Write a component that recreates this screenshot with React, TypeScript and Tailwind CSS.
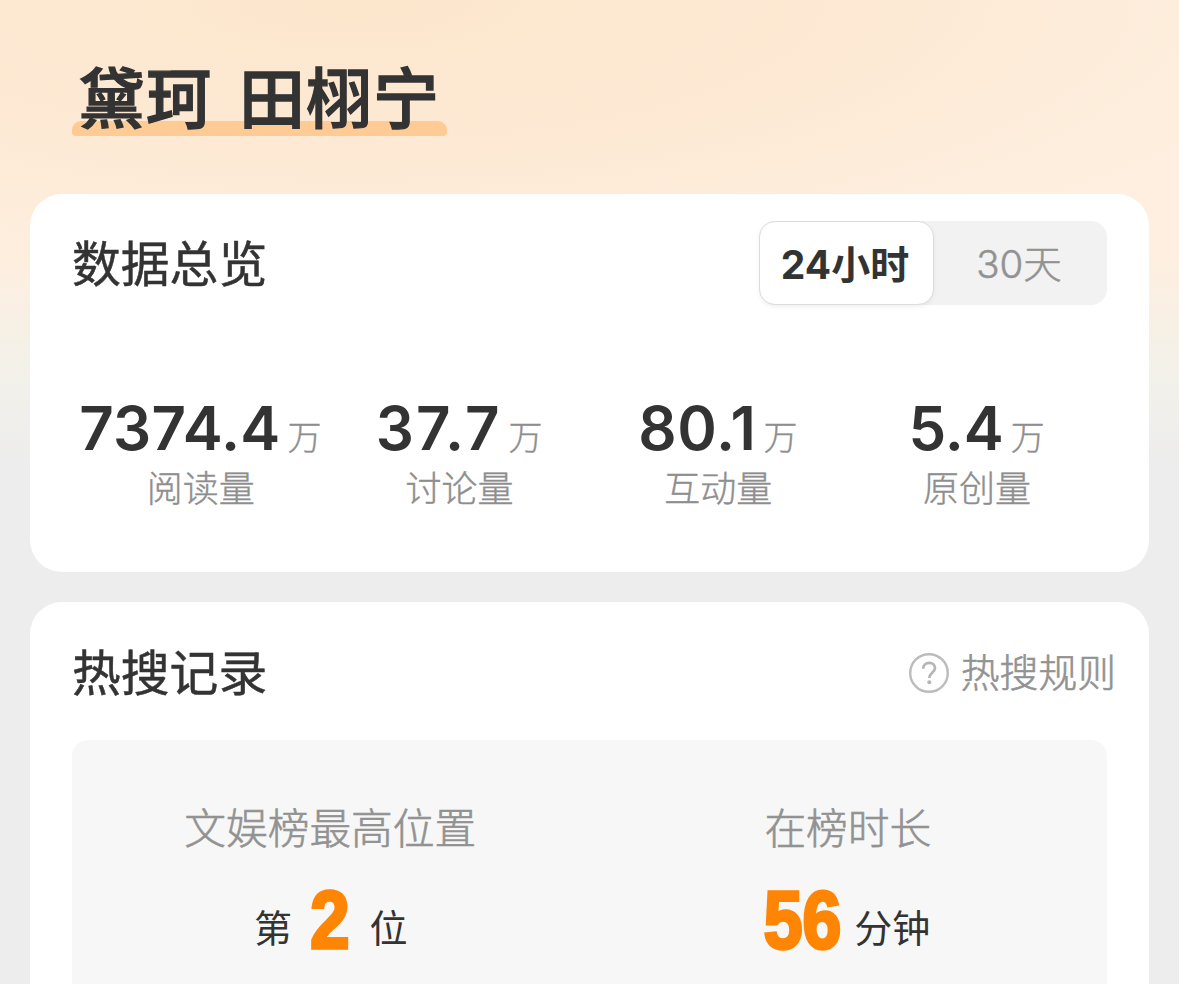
const stats = [
  { value: "7374.4", label: "阅读量", spacing: "tracking-[0.2px]" },
  { value: "37.7", label: "讨论量", spacing: "tracking-[2px]" },
  { value: "80.1", label: "互动量", spacing: "tracking-[0.7px]" },
  { value: "5.4", label: "原创量", spacing: "tracking-[0px]" },
];

function HelpIcon() {
  return (
    <svg className="h-[40px] w-[40px]" viewBox="0 0 40 40" fill="none">
      <circle cx="20" cy="20" r="18.8" stroke="#bcbcbc" strokeWidth="2.4" />
      <path d="M14.2 15.8c0-3.8 2.6-6 6-6s5.8 2.1 5.8 5.2c0 4.4-5.6 4.8-5.6 10" stroke="#b5b5b5" strokeWidth="2.7" />
      <circle cx="20.3" cy="29.2" r="2" fill="#b5b5b5" />
    </svg>
  );
}

export default function App() {
  return (
    <div className="h-[984px] w-[1179px] overflow-hidden bg-[#ededed] font-['Inter','Noto_Sans_CJK_SC',sans-serif] text-[#333333]">
      <div className="h-full bg-[linear-gradient(to_bottom,rgba(237,237,237,0)_0px,rgba(237,237,237,0)_260px,rgba(240,241,235,0.85)_375px,#ededed_460px),radial-gradient(ellipse_1000px_300px_at_30%_0px,#fce7cd_0%,#fde9d3_45%,#feefe0_100%)] px-[30px]">
        <header className="h-[194px] px-[42px] pt-[52px]">
          <div className="relative h-[84px] w-[375px]">
            <span className="absolute bottom-0 left-0 h-[15px] w-full rounded-t-[9px] rounded-b-[4px] bg-[#fecb95]" />
            <h1 className="relative pl-[6.5px] text-[66px] leading-[94px] font-medium tracking-[1.1px] whitespace-pre [-webkit-text-stroke:1.3px_#333333] [word-spacing:7.5px]">黛珂 田栩宁</h1>
          </div>
        </header>
        <section className="h-[378px] rounded-[32px] bg-white px-[42px] pt-[27px]">
          <div className="flex h-[84px] items-center justify-between">
            <h2 className="pt-[4px] text-[48.8px] [-webkit-text-stroke:0.5px_#333333]">数据总览</h2>
            <div className="flex h-[84px] w-[348px] rounded-2xl bg-[#f2f2f2]">
              <div className="flex w-[175px] items-center justify-center rounded-2xl border border-[#dddddd] bg-white pt-[5px] pr-[3px] text-[39px] font-bold shadow-[0_2px_4px_rgba(0,0,0,0.06)]">24小时</div>
              <div className="flex flex-1 items-center justify-center pt-[4px] pr-[3px] text-[38.5px] font-light text-[#929292] [-webkit-text-stroke:0.5px_#929292]">30天</div>
            </div>
          </div>
          <div className="mt-[87px] grid grid-cols-4">
            {stats.map((s) => (
              <div key={s.label} className="text-center">
                <div className="-ml-[2px] h-[72px] whitespace-nowrap text-[60px] leading-[72px] font-semibold"><span className={s.spacing}>{s.value}</span><span className="ml-[7px] text-[34px] font-light tracking-normal text-[#8e8e8e] [-webkit-text-stroke:0.4px_#8e8e8e]">万</span></div>
                <div className="-ml-px pt-px text-[36px] leading-[48px] font-light text-[#8e8e8e] [-webkit-text-stroke:0.4px_#8e8e8e]">{s.label}</div>
              </div>
            ))}
          </div>
        </section>
        <section className="mt-[30px] h-[382px] rounded-t-[32px] bg-white px-[42px] pt-[28px]">
          <div className="flex h-[84px] items-center justify-between">
            <h2 className="pt-[4px] text-[48.8px] [-webkit-text-stroke:0.5px_#333333]">热搜记录</h2>
            <div className="-mr-[9px] flex items-center gap-[12px] pt-[2px] text-[#929292]">
              <HelpIcon />
              <span className="text-[38.8px] font-light [-webkit-text-stroke:0.6px_#929292]">热搜规则</span>
            </div>
          </div>
          <div className="mt-[26px] grid h-[244px] grid-cols-2 rounded-t-[16px] bg-[#f7f7f7] pt-[58px]">
            <div className="text-center">
              <div className="-ml-px text-[41.7px] leading-[62px] font-light text-[#929292] [-webkit-text-stroke:0.6px_#929292]">文娱榜最高位置</div>
              <div className="mt-[20px] flex h-[80px] items-center justify-center text-[38px]">
                <span className="pt-[16px]">第</span>
                <span className="mr-[17px] ml-[15px] inline-block origin-center scale-x-[0.86] font-['Liberation_Sans'] text-[82px] leading-[80px] font-bold text-[#ff8504] [-webkit-text-stroke:3.5px_#ff8504]">2</span>
                <span className="pt-[16px]">位</span>
              </div>
            </div>
            <div className="text-center">
              <div className="-ml-px text-[41.7px] leading-[62px] font-light text-[#929292] [-webkit-text-stroke:0.6px_#929292]">在榜时长</div>
              <div className="mt-[20px] flex h-[80px] items-center justify-center text-[38px]">
                <span className="mr-[-7px] ml-[-9px] inline-block origin-center scale-x-[0.85] font-['Liberation_Sans'] text-[82px] leading-[80px] font-bold text-[#ff8504] [-webkit-text-stroke:3.5px_#ff8504]">56</span>
                <span className="pt-[16px] pl-[13px]">分钟</span>
              </div>
            </div>
          </div>
        </section>
      </div>
    </div>
  );
}
